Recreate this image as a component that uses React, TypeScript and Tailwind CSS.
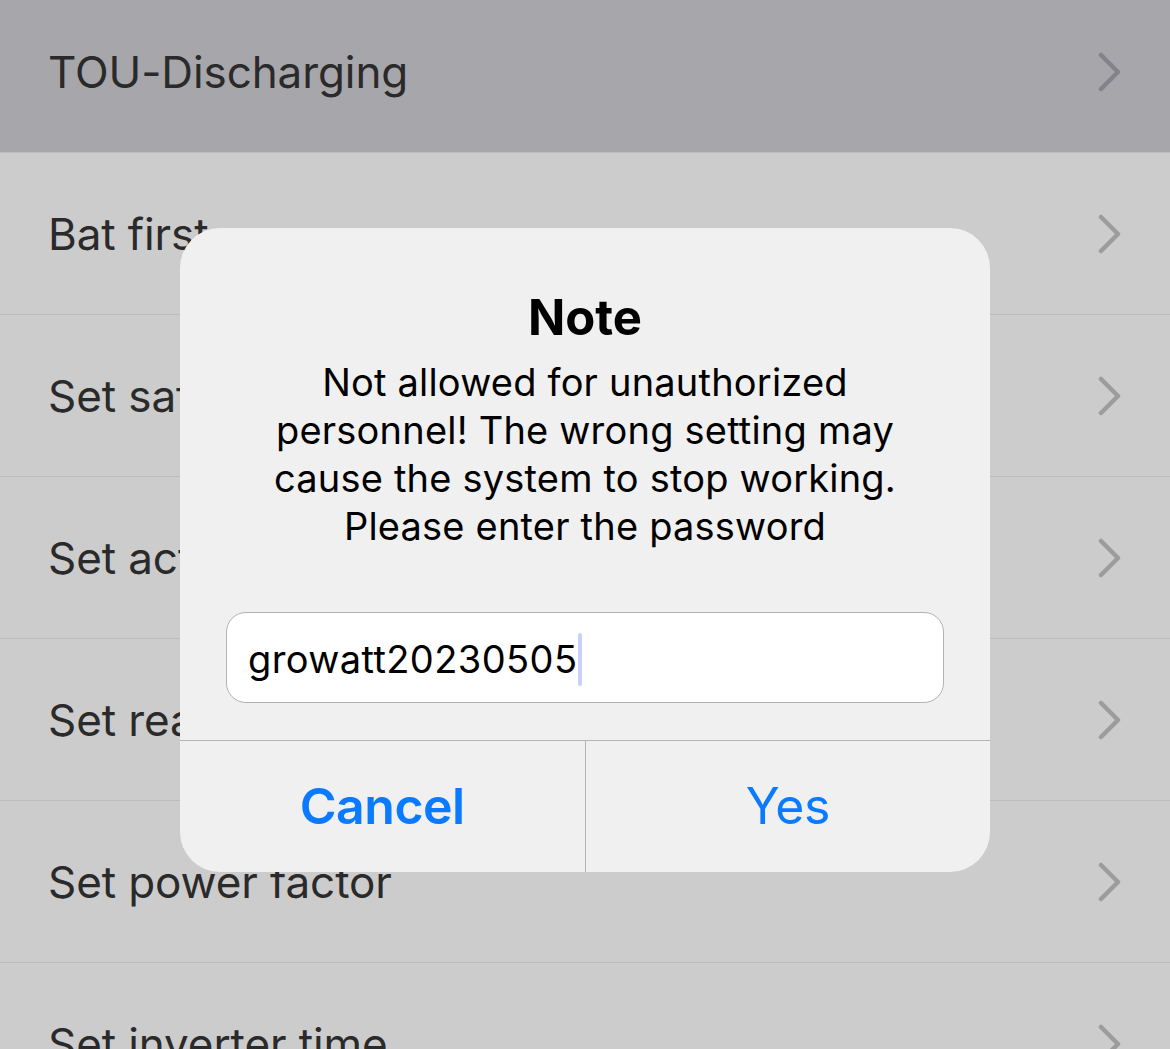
import React from "react";

const ROWS = [
  "TOU-Discharging",
  "Bat first",
  "Set safety function",
  "Set active power",
  "Set reactive power",
  "Set power factor",
  "Set inverter time",
];

function Chevron({ color }: { color: string }) {
  return (
    <svg width="24" height="40" viewBox="0 0 24 40" fill="none">
      <path d="M3 3 L20 20 L3 37" stroke={color} strokeWidth="4.5" strokeLinecap="round" strokeLinejoin="round" />
    </svg>
  );
}

export default function App() {
  return (
    <div
      className="relative w-[1170px] h-[1049px] overflow-hidden bg-[#cccccc]"
      style={{ fontFamily: "Inter, 'Liberation Sans', sans-serif" }}
    >
      {/* settings list (already dimmed by the alert backdrop) */}
      <div className="-mt-[9px]">
        {ROWS.map((label, i) => (
          <div
            key={label}
            className={`flex items-center justify-between h-[162px] pl-[48px] pr-[48px] border-b border-[#bcbcbc] ${
              i === 0 ? "bg-[#a7a6ab]" : "bg-[#cccccc]"
            }`}
          >
            <span className="text-[44px] tracking-[-0.1px] text-[#2a2a2a]">{label}</span>
            <Chevron color={i === 0 ? "#84838a" : "#9c9c9e"} />
          </div>
        ))}
      </div>

      {/* alert */}
      <div className="absolute inset-0 flex justify-center pt-[228px]">
        <div className="w-[810px] h-[644px] rounded-[40px] bg-[#f0f0f0] flex flex-col overflow-hidden">
          <div className="flex flex-col items-center px-[30px] pt-[62px]">
            <h1 className="text-[49px] leading-[56px] font-bold text-black">Note</h1>
            <p className="mt-[12px] text-[38px] leading-[48px] text-black text-center tracking-[0.2px]">
              Not allowed for unauthorized
              <br />
              personnel! The wrong setting may
              <br />
              cause the system to stop working.
              <br />
              Please enter the password
            </p>
          </div>
          <div className="px-[46px] pt-[62px] pb-[37px]">
            <div className="h-[91px] rounded-[20px] border border-[#b2b2b2] bg-white flex items-center pl-[21px] pt-[4px]">
              <span className="text-[38px] text-black tracking-[0.4px]">growatt20230505</span>
              <span className="w-[4px] h-[53px] ml-[1px] rounded-sm bg-[#c8d2f8]" />
            </div>
          </div>
          <div className="flex flex-1 border-t border-[#b5b5b5]">
            <button className="flex-1 flex items-center justify-center text-[50px] font-semibold text-[#0a7aff] border-r border-[#b5b5b5] -tracking-[0.5px]">
              Cancel
            </button>
            <button className="flex-1 flex items-center justify-center text-[50px] text-[#0a7aff] -tracking-[0.5px]">
              Yes
            </button>
          </div>
        </div>
      </div>
    </div>
  );
}
